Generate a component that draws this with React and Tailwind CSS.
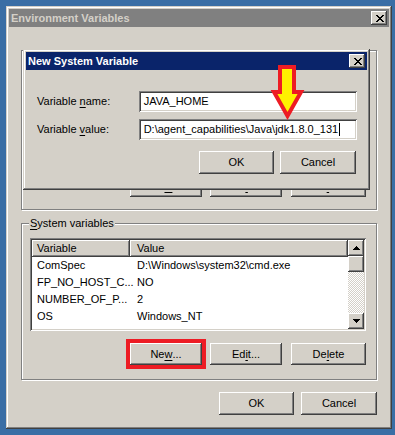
import React from 'react';

const raised = 'shadow-[inset_-1px_-1px_#404040,inset_1px_1px_#ffffff,inset_-2px_-2px_#808080,inset_2px_2px_#d4d0c8]';
const sunken = 'shadow-[inset_1px_1px_#808080,inset_-1px_-1px_#ffffff,inset_2px_2px_#404040,inset_-2px_-2px_#d4d0c8]';

function Btn({ children, className = '' }) {
  return (
    <div className={`flex items-center justify-center bg-[#d4d0c8] ${raised} ${className}`}>
      {children}
    </div>
  );
}

function U({ children }) {
  return <span className="underline underline-offset-[2px] decoration-1">{children}</span>;
}

function CloseX() {
  return (
    <Btn className="w-[16px] h-[14px]">
      <svg width="8" height="7" viewBox="0 0 8 7" shapeRendering="crispEdges" className="ml-[1px] mt-[1px]">
        <path
          fill="#000"
          d="M0 0h2v1H0zM6 0h2v1H6zM1 1h2v1H1zM5 1h2v1H5zM2 2h4v1H2zM3 3h2v1H3zM2 4h4v1H2zM1 5h2v1H1zM5 5h2v1H5zM0 6h2v1H0zM6 6h2v1H6z"
        />
      </svg>
    </Btn>
  );
}

function ScrollArrow({ down }) {
  return (
    <Btn className="w-[16px] h-[16px] shrink-0">
      <svg width="7" height="4" viewBox="0 0 7 4" shapeRendering="crispEdges">
        <path fill="#000" d={down ? 'M0 0h7v1H0zM1 1h5v1H1zM2 2h3v1H2zM3 3h1v1H3z' : 'M3 0h1v1H3zM2 1h3v1H2zM1 2h5v1H1zM0 3h7v1H0z'} />
      </svg>
    </Btn>
  );
}

const rows = [
  ['ComSpec', 'D:\\Windows\\system32\\cmd.exe'],
  ['FP_NO_HOST_C...', 'NO'],
  ['NUMBER_OF_P...', '2'],
  ['OS', 'Windows_NT'],
  ['Path', 'D:\\Windows\\system32;D:\\Windows;D:\\Windows\\System32\\Wbem'],
];

function ListView({ height, data }) {
  return (
    <div className={`flex w-[336px] ${height} bg-white p-[2px] ${sunken}`}>
      <div className="flex-1 flex flex-col overflow-hidden">
        <div className="flex h-[17px] shrink-0">
          <div className={`w-[98px] flex items-center pl-[5px] bg-[#d4d0c8] ${raised}`}>Variable</div>
          <div className={`flex-1 flex items-center pl-[7px] bg-[#d4d0c8] ${raised}`}>Value</div>
        </div>
        {data.map(([k, v]) => (
          <div key={k} className="flex h-[17px] shrink-0 items-center whitespace-nowrap">
            <div className="w-[98px] pl-[5px]">{k}</div>
            <div className="flex-1 pl-[7px]">{v}</div>
          </div>
        ))}
      </div>
      <div className="w-[16px] flex flex-col">
        <ScrollArrow />
        <Btn className="w-[16px] h-[16px] shrink-0" />
        <div className="flex-1 bg-[repeating-conic-gradient(#d4d0c8_0_25%,#ffffff_0_50%)] bg-[length:2px_2px]" />
        <ScrollArrow down />
      </div>
    </div>
  );
}

function GroupButtons({ newRef }) {
  return (
    <div className="flex justify-end pr-[10px]">
      <div className="relative">
        <Btn className="w-[72px] h-[22px]">
          Ne<U>w</U>...
        </Btn>
        {newRef && <div className="absolute -inset-[4px] border-4 border-[#ed1c24]" />}
      </div>
      <Btn className="w-[72px] h-[22px] ml-[8px]">
        Ed<U>i</U>t...
      </Btn>
      <Btn className="w-[75px] h-[22px] ml-[9px]">
        De<U>l</U>ete
      </Btn>
    </div>
  );
}

export default function App() {
  return (
    <div className="relative w-[395px] h-[435px] bg-[#3a6ea5] p-[6px] font-['Liberation_Sans',Arial,sans-serif] text-[11px] text-black leading-none">
      <div className={`w-[386px] h-[423px] bg-[#d4d0c8] p-[3px] shadow-[inset_-1px_-1px_#404040,inset_1px_1px_#d4d0c8,inset_-2px_-2px_#808080,inset_2px_2px_#ffffff]`}>
        <div className="h-[18px] bg-[#808080] flex items-center justify-between pl-[2px] pr-[2px]">
          <span className="font-bold text-[#d4d0c8] text-[11px]">Environment Variables</span>
          <CloseX />
        </div>

        <div className="px-[12px]">
          {/* user variables group, covered by the dialog */}
          <div className="relative mt-[23px] h-[160px] border border-[#808080] shadow-[inset_1px_1px_#ffffff,1px_1px_#ffffff] pt-[14px] pl-[8px]">
            <ListView height="h-[99px]" data={[]} />
            <div className="mt-[11px] -ml-[8px]">
              <GroupButtons />
            </div>
          </div>

          {/* System variables */}
          <div className="relative mt-[13px] h-[157px] border border-[#808080] shadow-[inset_1px_1px_#ffffff,1px_1px_#ffffff] pt-[14px] pl-[8px]">
            <div className="absolute -top-[6px] left-[7px] bg-[#d4d0c8] px-[1px]">
              <U>S</U>ystem variables
            </div>
            <ListView height="h-[93px]" data={rows} />
            <div className="mt-[12px] -ml-[8px]">
              <GroupButtons newRef />
            </div>
          </div>

          <div className="flex justify-end mt-[12px] gap-[7px]">
            <Btn className="w-[75px] h-[23px]">OK</Btn>
            <Btn className="w-[76px] h-[23px]">Cancel</Btn>
          </div>
        </div>
      </div>

      {/* New System Variable dialog on top */}
      <div className={`absolute left-[23px] top-[49px] w-[347px] h-[141px] bg-[#d4d0c8] p-[3px] shadow-[inset_-1px_-1px_#404040,inset_1px_1px_#d4d0c8,inset_-2px_-2px_#808080,inset_2px_2px_#ffffff]`}>
        <div className="h-[18px] bg-[#0a246a] flex items-center justify-between pl-[2px] pr-[2px]">
          <span className="font-bold text-white text-[11px]">New System Variable</span>
          <CloseX />
        </div>
        <div className="pl-[11px] pr-[10px] pt-[21px]">
          <div className="flex items-center">
            <div className="w-[102px]">
              Variable <U>n</U>ame:
            </div>
            <div className={`w-[219px] h-[21px] bg-white flex items-center pl-[5px] ${sunken}`}>JAVA_HOME</div>
          </div>
          <div className="flex items-center mt-[7px]">
            <div className="w-[102px]">
              Variable <U>v</U>alue:
            </div>
            <div className={`w-[219px] h-[21px] bg-white flex items-center pl-[5px] ${sunken}`}>
              D:\agent_capabilities\Java\jdk1.8.0_131
              <span className="inline-block w-[1px] h-[13px] bg-black ml-[1px]" />
            </div>
          </div>
          <div className="flex justify-end mt-[11px] pr-[1px] gap-[6px]">
            <Btn className="w-[75px] h-[23px]">OK</Btn>
            <Btn className="w-[76px] h-[23px]">Cancel</Btn>
          </div>
        </div>
      </div>

      {/* annotation arrow */}
      <svg className="absolute left-[266px] top-[60px]" width="44" height="66" viewBox="266 60 44 66">
        <polygon
          points="280,67 294,67 294,92 301,92 287.5,116 274,92 280,92"
          fill="#fff200"
          stroke="#ed1c24"
          strokeWidth="4"
          strokeLinejoin="miter"
        />
      </svg>
    </div>
  );
}
